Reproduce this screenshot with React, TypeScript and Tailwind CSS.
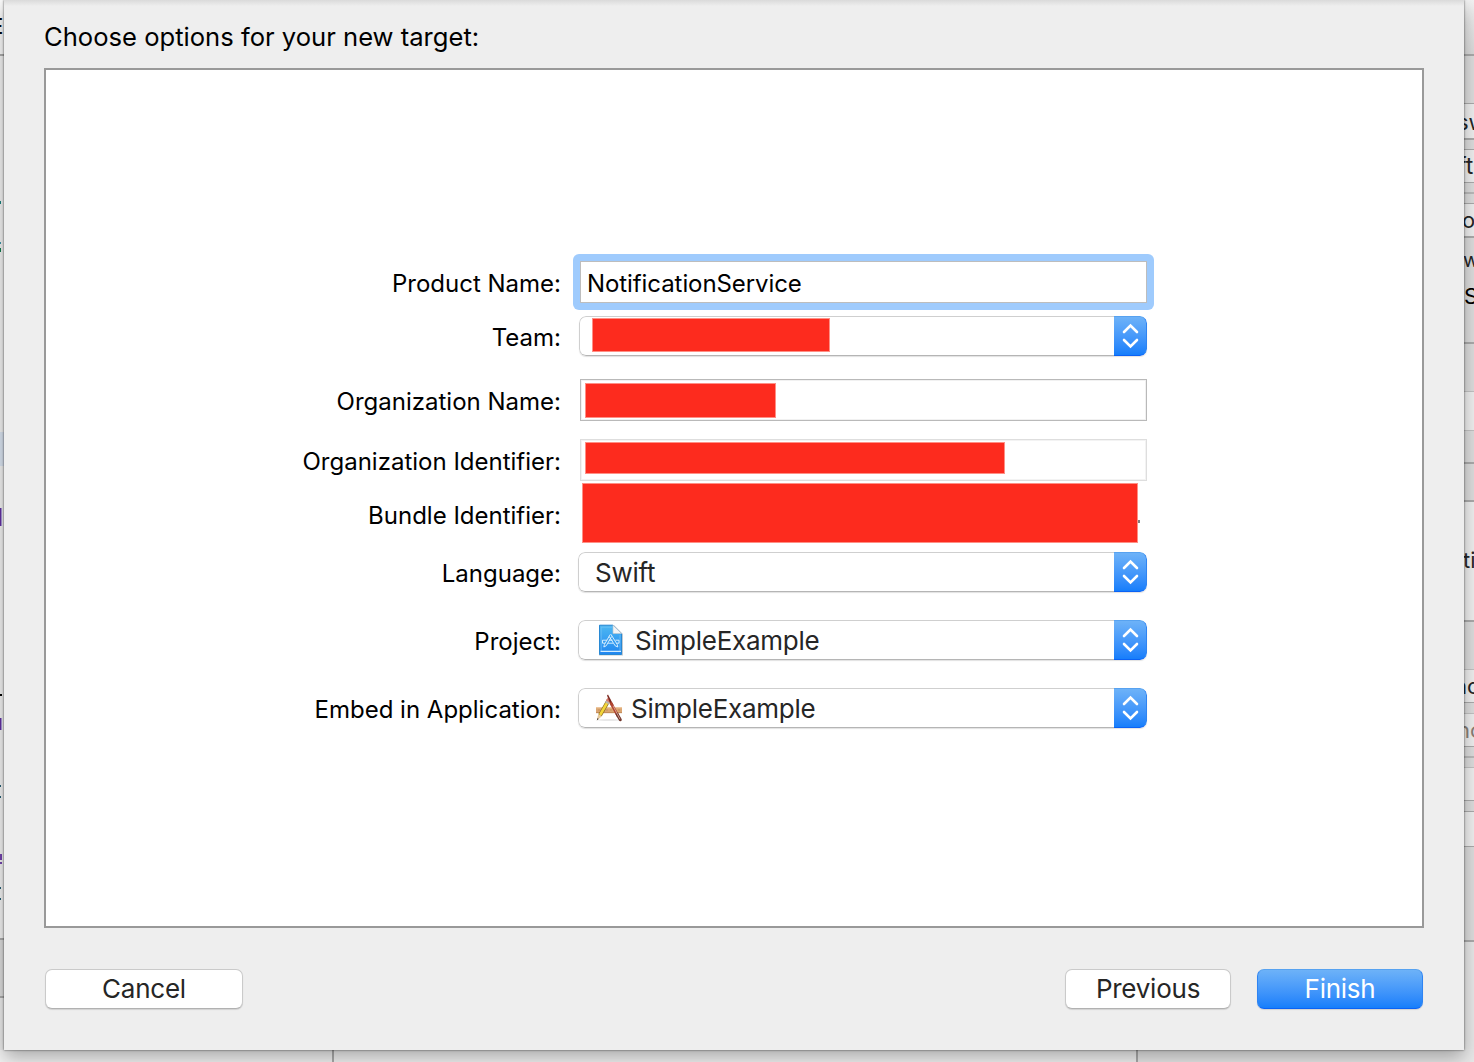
import React from "react";

type Segment = { h: string; bg: string; node?: React.ReactNode };

const line = "bg-[#acacac]";
const gray = "bg-[#dfdfdf]";
const field = "bg-[#f1f1f1]";

function Strip({ segments, className }: { segments: Segment[]; className: string }) {
  return (
    <div className={`flex shrink-0 flex-col overflow-hidden ${className}`}>
      {segments.map((s, i) => (
        <div key={i} className={`shrink-0 overflow-hidden whitespace-nowrap ${s.h} ${s.bg}`}>
          {s.node}
        </div>
      ))}
    </div>
  );
}

const leftSegments: Segment[] = [
  { h: "h-[54px]", bg: "bg-[#fafafa]", node: <span className="-ml-[10px] block pt-[9px] text-[22px] font-medium leading-[34px] text-black">E</span> },
  { h: "h-[2px]", bg: line },
  { h: "h-[145px]", bg: "bg-[#f3f3f3]" },
  { h: "h-[3px]", bg: "bg-[#f3f3f3]", node: <i className="block h-[3px] w-px bg-[#16807c]" /> },
  { h: "h-[38px]", bg: "bg-[#f3f3f3]" },
  { h: "h-[2px]", bg: "bg-[#f3f3f3]", node: <i className="block h-[2px] w-px bg-[#3b93a8]" /> },
  { h: "h-[4px]", bg: "bg-[#f3f3f3]" },
  { h: "h-[4px]", bg: "bg-[#f3f3f3]", node: <i className="block h-[4px] w-px bg-[#117a4c]" /> },
  { h: "h-[180px]", bg: "bg-[#f3f3f3]" },
  { h: "h-[34px]", bg: "bg-[#dbe5f2]" },
  { h: "h-[42px]", bg: "bg-[#f3f3f3]" },
  { h: "h-[18px]", bg: "bg-[#f3f3f3]", node: <i className="block h-[18px] w-[2px] border-r border-[#a99ad8] bg-[#6330a0]" /> },
  { h: "h-[168px]", bg: "bg-[#f3f3f3]" },
  { h: "h-[2px]", bg: "bg-[#f3f3f3]", node: <i className="block h-[2px] w-[2px] bg-black" /> },
  { h: "h-[22px]", bg: "bg-[#f3f3f3]" },
  { h: "h-[12px]", bg: "bg-[#f3f3f3]", node: <i className="block h-[12px] w-[2px] border-r border-[#a99ad8] bg-[#6330a0]" /> },
  { h: "h-[55px]", bg: "bg-[#f3f3f3]" },
  { h: "h-[2px]", bg: "bg-[#f3f3f3]", node: <i className="block h-[2px] w-px bg-[#225d74]" /> },
  { h: "h-[9px]", bg: "bg-[#f3f3f3]" },
  { h: "h-[2px]", bg: "bg-[#f3f3f3]", node: <i className="block h-[2px] w-px bg-[#225d74]" /> },
  { h: "h-[56px]", bg: "bg-[#f3f3f3]" },
  { h: "h-[6px]", bg: "bg-[#f3f3f3]", node: <i className="block h-[6px] w-[2px] bg-[#7444ae]" /> },
  { h: "h-[2px]", bg: "bg-[#f3f3f3]" },
  { h: "h-[3px]", bg: "bg-[#f3f3f3]", node: <i className="block h-[2px] w-[2px] bg-[#7444ae]" /> },
  { h: "h-[22px]", bg: "bg-[#f3f3f3]" },
  { h: "h-[2px]", bg: "bg-[#f3f3f3]", node: <i className="block h-[2px] w-px bg-[#225d74]" /> },
  { h: "h-[9px]", bg: "bg-[#f3f3f3]" },
  { h: "h-[2px]", bg: "bg-[#f3f3f3]", node: <i className="block h-[2px] w-px bg-[#225d74]" /> },
  { h: "h-[38px]", bg: "bg-[#f3f3f3]" },
  { h: "h-[2px]", bg: line },
  { h: "h-[56px]", bg: "bg-[#dedede]" },
  { h: "h-[2px]", bg: line },
  { h: "h-[52px]", bg: "bg-[#ececec]" },
];

const rightSegments: Segment[] = [
  { h: "h-[54px]", bg: "bg-linear-to-b from-[#f2f2f2] to-[#dcdcdc]" },
  { h: "h-[2px]", bg: line },
  { h: "h-[47px]", bg: gray },
  { h: "h-px", bg: line },
  { h: "h-[34px]", bg: field, node: <span className="-ml-[7px] block text-[22px] leading-[36px]">sw</span> },
  { h: "h-[2px]", bg: line },
  { h: "h-[9px]", bg: gray },
  { h: "h-px", bg: line },
  { h: "h-[32px]", bg: field, node: <span className="-ml-[6px] block text-[23px] leading-[32px]">ft</span> },
  { h: "h-px", bg: line },
  { h: "h-[9px]", bg: gray },
  { h: "h-[2px]", bg: "bg-[#bcbcbc]" },
  { h: "h-[9px]", bg: gray },
  { h: "h-px", bg: line },
  { h: "h-[32px]", bg: field, node: <span className="-ml-[2px] block text-[22px] leading-[32px]">o</span> },
  { h: "h-[2px]", bg: line },
  { h: "h-[104px]", bg: gray, node: (
    <>
      <span className="-ml-[1px] block pt-[9px] text-[20px] leading-[26px]">w</span>
      <span className="block pt-[10px] text-[22px] leading-[27px] text-black">S</span>
    </>
  ) },
  { h: "h-[2px]", bg: line },
  { h: "h-[47px]", bg: gray },
  { h: "h-px", bg: "bg-[#c4c4c4]" },
  { h: "h-[38px]", bg: field },
  { h: "h-px", bg: "bg-[#c4c4c4]" },
  { h: "h-[31px]", bg: gray },
  { h: "h-[2px]", bg: line },
  { h: "h-[36px]", bg: gray },
  { h: "h-[2px]", bg: line },
  { h: "h-[118px]", bg: field, node: <span className="-ml-[1px] block pt-[45px] text-[22px] leading-[26px]">ti</span> },
  { h: "h-[2px]", bg: line },
  { h: "h-[47px]", bg: gray },
  { h: "h-px", bg: "bg-[#c4c4c4]" },
  { h: "h-[32px]", bg: field, node: <span className="-ml-[10px] block text-[22px] leading-[32px]">nc</span> },
  { h: "h-px", bg: line },
  { h: "h-[10px]", bg: gray },
  { h: "h-px", bg: "bg-[#c4c4c4]" },
  { h: "h-[32px]", bg: field, node: <span className="-ml-[7px] block text-[22px] leading-[33px] text-[#8b8178]">no</span> },
  { h: "h-px", bg: line },
  { h: "h-[9px]", bg: gray },
  { h: "h-[2px]", bg: "bg-[#bcbcbc]" },
  { h: "h-[9px]", bg: gray },
  { h: "h-px", bg: "bg-[#c4c4c4]" },
  { h: "h-[32px]", bg: field },
  { h: "h-px", bg: line },
  { h: "h-[10px]", bg: gray },
  { h: "h-px", bg: line },
  { h: "h-[34px]", bg: field },
  { h: "h-px", bg: line },
  { h: "h-[93px]", bg: gray },
  { h: "h-[2px]", bg: line },
  { h: "h-[107px]", bg: "bg-[#e9e9e9]" },
];

function Row({ label, className, labelClassName = "pt-[4px]", children }: { label: string; className: string; labelClassName?: string; children: React.ReactNode }) {
  return (
    <div className={`flex shrink-0 ${className}`}>
      <div className={`flex w-[515px] shrink-0 items-center justify-end whitespace-nowrap text-[24px] text-black ${labelClassName}`}>{label}</div>
      <div className="flex min-w-0 grow">{children}</div>
    </div>
  );
}

function Select({ children, className = "ml-[17px] w-[569px]" }: { children: React.ReactNode; className?: string }) {
  return (
    <div className={`flex h-[40px] overflow-hidden rounded-[7px] shadow-[0_1px_1px_rgba(0,0,0,0.12)] ${className}`}>
      <div className="flex grow items-center rounded-l-[7px] border border-r-0 border-[#cfcfcf] border-b-[#b5b5b5] bg-white text-[26px] tracking-[-0.25px] text-[#262626]">
        {children}
      </div>
      <div className="flex w-[33px] items-center justify-center rounded-r-[7px] border-t border-r border-b border-t-[#57a2f0] border-r-[#2f84f2] border-b-[#0b62f5] bg-linear-to-b from-[#6db2f8] to-[#157efb]">
        <svg width="17" height="26" viewBox="0 0 17 26" fill="none" stroke="white" strokeWidth="2.6" strokeLinecap="round" strokeLinejoin="miter">
          <path d="M2 9L8.5 2.5L15 9M2 17L8.5 23.5L15 17" />
        </svg>
      </div>
    </div>
  );
}

function Redaction({ className }: { className: string }) {
  return <div className={`shrink-0 border border-[#ff8f85] bg-[#fd2b1e] ${className}`} />;
}

function ProjectIcon() {
  return (
    <svg className="ml-[19px] shrink-0" width="26" height="32" viewBox="0 0 26 32">
      <defs>
        <linearGradient id="doc" x1="0" y1="0" x2="0" y2="1">
          <stop offset="0" stopColor="#4db8f2" />
          <stop offset="1" stopColor="#2186f0" />
        </linearGradient>
      </defs>
      <path d="M1 1H16L25 10V31.5H1Z" fill="#c4c9ce" />
      <path d="M1.5 1.2H15L23.5 9.5V30.5H1.5Z" fill="url(#doc)" stroke="#2889d4" strokeWidth="1" />
      <path d="M3.2 3.2H14M3.2 3.2V27M22 11V27" fill="none" stroke="#7cc6f6" strokeWidth=".6" />
      <path d="M2.5 27.3H23" stroke="#d3edff" strokeWidth="1.2" />
      <path d="M15 1.2V9.5H23.5Z" fill="#f2f4f6" stroke="#bfc7ce" strokeWidth=".7" />
      <path d="M12.2 10.5L6.4 20.6M13.6 12.5L8.2 21.8L5.8 23L6.4 20.6M11.2 12.5L17.2 21.8L19.8 23L19.2 20.4L12.8 10.2M4.5 16.2H9M11 16.2H14.5M17.5 16.2H21M4.5 19.2H7M10 19.2H15M18.5 19.2H21M4.5 16.2V19.2M21 16.2V19.2" fill="none" stroke="#e3f4ff" strokeWidth=".9" />
    </svg>
  );
}

function AppIcon() {
  return (
    <svg className="ml-[16px] shrink-0" width="28" height="28" viewBox="0 0 28 28">
      <ellipse cx="14" cy="26" rx="11" ry="1" fill="#e8e8e8" />
      <rect x="1" y="13.5" width="26" height="5.5" fill="#dba672" />
      <path d="M1 13.8H27" stroke="#edc295" strokeWidth="1" />
      <path d="M1 18.7H27" stroke="#b98250" strokeWidth=".8" />
      <path d="M4 17V15M8 17V15M12 17V15M16 17V15M20 17V15M24 17V15" stroke="#aa7847" strokeWidth=".5" />
      <path d="M13.6 6.2L5 21.3" stroke="#8b6b20" strokeWidth="4" />
      <path d="M13.4 6.5L5.1 21" stroke="#f3d63a" strokeWidth="2.6" />
      <path d="M14.2 5L12.6 7.8" stroke="#d97a6d" strokeWidth="4" />
      <path d="M12.8 7.5L11.8 9.2" stroke="#b9b4b0" strokeWidth="4" />
      <path d="M3.2 20.3L6.9 22.3L1.8 26.4Z" fill="#e7c99b" />
      <path d="M2.6 24L3.6 25L1.8 26.4Z" fill="#332b27" />
      <path d="M12 1.5L13 .5L18.5 11L16.2 12.3Z" fill="#7d2b22" />
      <path d="M15.6 8.5L23 22" stroke="#b14430" strokeWidth="2.7" />
      <path d="M22 20L25.3 25.8" stroke="#703429" strokeWidth="3" strokeLinecap="round" />
      <path d="M18 11.8L25 25.2" stroke="#dfb3a6" strokeWidth=".8" />
    </svg>
  );
}

const plainButton = "rounded-[7px] border border-[#cacaca] border-b-[#b1b1b1] bg-white shadow-[0_1px_1px_rgba(0,0,0,0.12)]";

export default function App() {
  return (
    <div className="flex h-[1062px] w-[1474px] flex-col overflow-hidden bg-[#eaeaea] font-['Inter',sans-serif] text-[#262626]">
      <div className="flex h-[1050px] shrink-0">
        <Strip segments={leftSegments} className="w-[4px]" />
        <main className="relative z-10 flex w-[1460px] shrink-0 flex-col bg-[#eeeeee] shadow-[0_0_2px_rgba(0,0,0,0.65),0_8px_18px_rgba(0,0,0,0.3)]">
          <div className="h-[6px] shrink-0 bg-linear-to-b from-[#dadada] to-[#eeeeee]" />
          <h1 className="ml-[40px] flex h-[62px] shrink-0 items-center whitespace-nowrap text-[25.6px] text-black">Choose options for your new target:</h1>
          <section className="ml-[40px] flex h-[860px] w-[1380px] shrink-0 flex-col border-2 border-[#999999] bg-white pt-[191px]">
            <Row label="Product Name:" className="h-[42px]">
              <div className="-my-[7px] ml-[12px] flex w-[581px] rounded-[6px] bg-[#9fcbfd] p-[7px]">
                <div className="flex grow items-center border border-[#bdbdbd] bg-white pt-[4px] pl-[6px] text-[24px] tracking-[-0.08px] text-black">NotificationService</div>
              </div>
            </Row>
            <Row label="Team:" className="mt-[13px] h-[40px]">
              <Select className="ml-[18px] w-[568px]"><Redaction className="mb-[2px] ml-[12px] h-[34px] w-[238px]" /></Select>
            </Row>
            <Row label="Organization Name:" className="mt-[23px] h-[42px]">
              <div className="ml-[19px] w-[567px] border border-[#b9b9b9] pt-[3px] pl-[4px] shadow-[inset_0_0_0_1px_#f1f1f1]"><Redaction className="h-[35px] w-[191px]" /></div>
            </Row>
            <Row label="Organization Identifier:" className="mt-[18px] h-[42px]">
              <div className="ml-[19px] w-[567px] border border-[#dedede] pt-[2px] pl-[4px] shadow-[inset_0_0_0_1px_#f3f3f3]"><Redaction className="h-[32px] w-[420px]" /></div>
            </Row>
            <Row label="Bundle Identifier:" className="mt-[2px] h-[60px]" labelClassName="pt-[6px]">
              <Redaction className="ml-[21px] h-[60px] w-[556px]" />
              <i className="mt-[37px] h-[3px] w-[2px] bg-[#808080]" />
            </Row>
            <Row label="Language:" className="mt-[9px] h-[40px]">
              <Select><span className="pl-[16px]">Swift</span></Select>
            </Row>
            <Row label="Project:" className="mt-[28px] h-[40px]">
              <Select><ProjectIcon /><span className="pl-[11px]">SimpleExample</span></Select>
            </Row>
            <Row label="Embed in Application:" className="mt-[28px] h-[40px]">
              <Select><AppIcon /><span className="pl-[8px]">SimpleExample</span></Select>
            </Row>
          </section>
          <footer className="mt-[41px] ml-[41px] flex h-[40px] w-[1378px] text-[26px] leading-[36px] tracking-[-0.25px]">
            <button className={`w-[198px] ${plainButton}`}>Cancel</button>
            <button className={`ml-auto w-[166px] ${plainButton}`}>Previous</button>
            <button className="ml-[26px] w-[166px] rounded-[7px] border border-x-[#2f84f2] border-t-[#57a2f0] border-b-[#0b62f5] bg-linear-to-b from-[#6db2f8] to-[#157efb] text-white shadow-[0_1px_1px_rgba(0,0,0,0.12)]">Finish</button>
          </footer>
        </main>
        <Strip segments={rightSegments} className="w-[10px]" />
      </div>
      <div className="flex h-[12px] shrink-0">
        <div className="w-[332px] bg-[#f3f3f3]" />
        <div className="w-[2px] bg-[#acacac]" />
        <div className="w-[802px] bg-[#f3f3f3]" />
        <div className="w-[2px] bg-[#acacac]" />
        <div className="grow bg-[#e9e9e9]" />
      </div>
    </div>
  );
}
